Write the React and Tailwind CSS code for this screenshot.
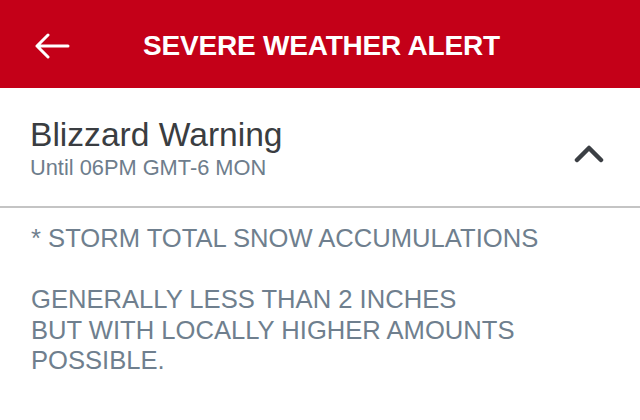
export default function App() {
	const body = [
		'* STORM TOTAL SNOW ACCUMULATIONS',
		'\u00a0',
		'GENERALLY LESS THAN 2 INCHES',
		'BUT WITH LOCALLY HIGHER AMOUNTS',
		'POSSIBLE.',
	];
	return (
		<div className="h-[420px] w-[640px] overflow-hidden bg-white" style={{ fontFamily: '"Liberation Sans", Arial, sans-serif' }}>
			<header className="flex h-[88px] items-center bg-[#c40018] pt-[3px]">
				<svg className="ml-[35px] h-[26px] w-[35px]" viewBox="0 0 35 26" fill="none" stroke="#fff" strokeWidth="3" strokeLinecap="round" strokeLinejoin="round">
					<path d="M2 13 H33 M13 2 L2 13 L13 24" />
				</svg>
				<h1 className="ml-[73px] text-[28px] font-bold leading-none tracking-[-0.2px] text-white">SEVERE WEATHER ALERT</h1>
			</header>

			<section className="flex items-center justify-between border-b-2 border-[#c4c4c4] pl-[30px] pr-[36px] pt-[28px] pb-[25px]">
				<div>
					<div className="text-[33.6px] leading-[38px] text-[#3a3d41]">Blizzard Warning</div>
					<div className="mt-px text-[21.8px] leading-[26px] text-[#6e7d8c]">Until 06PM GMT-6 MON</div>
				</div>
				<svg className="mt-[10px] h-[20px] w-[30px]" viewBox="0 0 30 20" fill="none" stroke="#3b3f44" strokeWidth="4.5" strokeLinecap="round" strokeLinejoin="round">
					<path d="M3 16 L15 4 L27 16" />
				</svg>
			</section>

			<div className="pl-[31px] pt-[15px] text-[25.6px] leading-[30.5px] text-[#6f7f8e]">
				{body.map((line, i) => (
					<div key={i}>{line}</div>
				))}
			</div>
		</div>
	);
}
